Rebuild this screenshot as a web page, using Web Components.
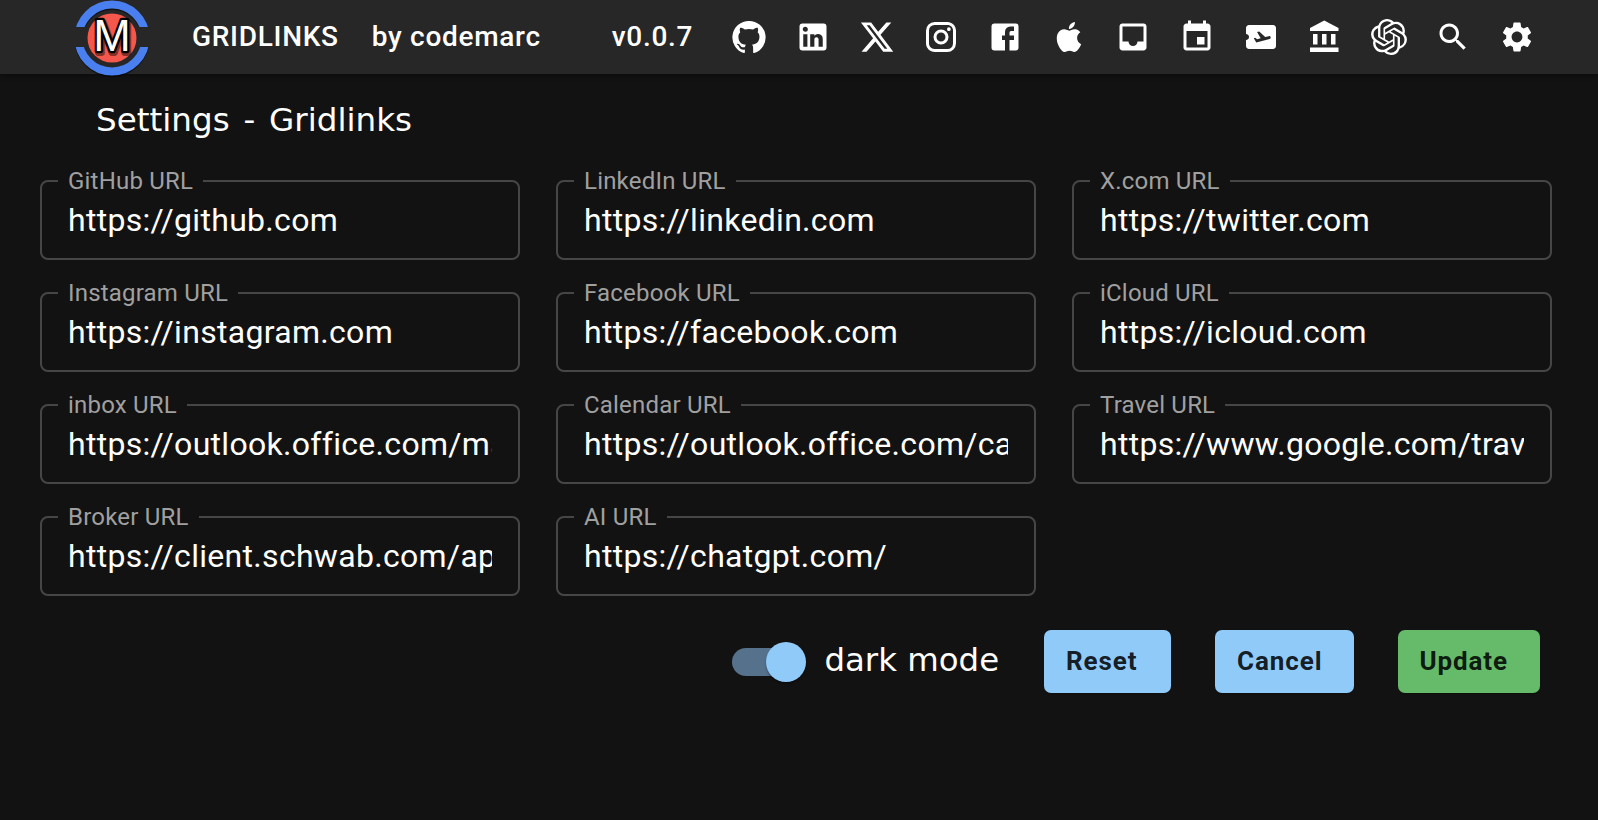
<!DOCTYPE html>
<html>
<head>
<meta charset="utf-8">
<title>Gridlinks</title>
<style>
  html, body { margin: 0; height: 100%; background: #121212; overflow: hidden; }
  body { font-family: Roboto, "Liberation Sans", sans-serif; color: #fff; }
  app-header { position: relative; z-index: 1; }
</style>
</head>
<body>
<app-header></app-header>
<settings-page></settings-page>

<script>
const ICONS = {
  github: "M12 1.27a11 11 0 00-3.48 21.46c.55.09.73-.28.73-.55v-1.84c-3.03.64-3.67-1.46-3.67-1.46-.55-1.29-1.28-1.65-1.28-1.65-.92-.65.1-.65.1-.65 1.1 0 1.73 1.1 1.73 1.1.92 1.65 2.57 1.2 3.21.92a2 2 0 01.64-1.47c-2.47-.27-5.04-1.19-5.04-5.5 0-1.1.46-2.1 1.2-2.84a3.76 3.76 0 010-2.93s.91-.28 3.11 1.1c1.8-.49 3.7-.49 5.5 0 2.1-1.38 3.02-1.1 3.02-1.1a3.76 3.76 0 010 2.93c.83.74 1.2 1.74 1.2 2.94 0 4.21-2.57 5.13-5.04 5.4.45.37.82.92.82 2.02v3.03c0 .27.1.64.73.55A11 11 0 0012 1.27",
  linkedin: "M19 3a2 2 0 0 1 2 2v14a2 2 0 0 1-2 2H5a2 2 0 0 1-2-2V5a2 2 0 0 1 2-2h14m-.5 15.5v-5.3a3.26 3.26 0 0 0-3.26-3.26c-.85 0-1.84.52-2.32 1.3v-1.11h-2.79v8.37h2.79v-4.93c0-.77.62-1.4 1.39-1.4a1.4 1.4 0 0 1 1.4 1.4v4.93h2.79M6.88 8.56a1.68 1.68 0 0 0 1.68-1.68c0-.93-.75-1.69-1.68-1.69a1.69 1.69 0 0 0-1.69 1.69c0 .93.76 1.68 1.69 1.68m1.39 9.94v-8.37H5.5v8.37h2.77z",
  x: "M18.244 2.25h3.308l-7.227 8.26 8.502 11.24H16.17l-5.214-6.817L4.99 21.75H1.68l7.73-8.835L1.254 2.25H8.08l4.713 6.231zm-1.161 17.52h1.833L7.084 4.126H5.117z",
  instagram: "M7.8 2h8.4C19.4 2 22 4.6 22 7.8v8.4a5.8 5.8 0 0 1-5.8 5.8H7.8C4.6 22 2 19.4 2 16.2V7.8A5.8 5.8 0 0 1 7.8 2m-.2 2A3.6 3.6 0 0 0 4 7.6v8.8C4 18.39 5.61 20 7.6 20h8.8a3.6 3.6 0 0 0 3.6-3.6V7.6C20 5.61 18.39 4 16.4 4H7.6m9.65 1.5a1.25 1.25 0 0 1 1.25 1.25A1.25 1.25 0 0 1 17.25 8 1.25 1.25 0 0 1 16 6.75a1.25 1.25 0 0 1 1.25-1.25M12 7a5 5 0 0 1 5 5 5 5 0 0 1-5 5 5 5 0 0 1-5-5 5 5 0 0 1 5-5m0 2a3 3 0 0 0-3 3 3 3 0 0 0 3 3 3 3 0 0 0 3-3 3 3 0 0 0-3-3z",
  facebook: "M5 3h14a2 2 0 0 1 2 2v14a2 2 0 0 1-2 2H5a2 2 0 0 1-2-2V5a2 2 0 0 1 2-2m13 2h-2.5A3.5 3.5 0 0 0 12 8.5V11h-2v3h2v7h3v-7h3v-3h-3V9a1 1 0 0 1 1-1h2V5z",
  apple: "M18.71 19.5c-.83 1.24-1.71 2.45-3.05 2.47-1.34.03-1.77-.79-3.29-.79-1.53 0-2 .77-3.27.82-1.31.05-2.3-1.32-3.14-2.53C4.25 17 2.94 12.45 4.7 9.39c.87-1.52 2.43-2.48 4.12-2.51 1.28-.02 2.5.87 3.29.87.78 0 2.26-1.07 3.81-.91.65.03 2.47.26 3.64 1.98-.09.06-2.17 1.28-2.15 3.81.03 3.02 2.65 4.03 2.68 4.04-.03.07-.42 1.44-1.38 2.83M13 3.5c.73-.83 1.94-1.46 2.94-1.5.13 1.17-.34 2.35-1.04 3.19-.69.85-1.83 1.51-2.95 1.42-.15-1.15.41-2.35 1.05-3.11z",
  inbox: "M19 3H4.99c-1.11 0-1.98.89-1.98 2L3 19c0 1.1.88 2 1.99 2H19c1.1 0 2-.9 2-2V5c0-1.11-.9-2-2-2zm0 12h-4c0 1.66-1.35 3-3 3s-3-1.34-3-3H4.99V5H19v10z",
  event: "M17 12h-5v5h5v-5zM16 1v2H8V1H6v2H5c-1.11 0-1.99.9-1.99 2L3 19c0 1.1.89 2 2 2h14c1.1 0 2-.9 2-2V5c0-1.1-.9-2-2-2h-1V1h-2zm3 18H5V8h14v11z",
  ticket: "M20.19 4H4c-1.1 0-1.99.9-1.99 2v4c1.1 0 2 .9 2 2s-.89 2-2 2v4c0 1.1.9 2 2 2H20c1.1 0 2-.9 2-2V6c0-1.1-.9-2-1.81-2zm-2.46 9.3-8.86 2.36-1.66-2.88.93-.25 1.26.99 2.39-.64-2.4-4.16 1.4-.38 4.01 3.74 2.44-.65c.51-.14 1.04.17 1.18.68.13.51-.17 1.04-.69 1.19z",
  bank: "M4 10v7h3v-7H4zm6 0v7h3v-7h-3zM2 22h19v-3H2v3zm14-12v7h3v-7h-3zm-4.5-9L2 6v2h19V6l-9.5-5z",
  openai: "M22.2819 9.8211a5.9847 5.9847 0 0 0-.5157-4.9108 6.0462 6.0462 0 0 0-6.5098-2.9A6.0651 6.0651 0 0 0 4.9807 4.1818a5.9847 5.9847 0 0 0-3.9977 2.9 6.0462 6.0462 0 0 0 .7427 7.0966 5.98 5.98 0 0 0 .511 4.9107 6.051 6.051 0 0 0 6.5146 2.9001A5.9847 5.9847 0 0 0 13.2599 24a6.0557 6.0557 0 0 0 5.7718-4.2058 5.9894 5.9894 0 0 0 3.9977-2.9001 6.0557 6.0557 0 0 0-.7475-7.0729zm-9.022 12.6081a4.4755 4.4755 0 0 1-2.8764-1.0408l.1419-.0804 4.7783-2.7582a.7948.7948 0 0 0 .3927-.6813v-6.7369l2.02 1.1686a.071.071 0 0 1 .038.052v5.5826a4.504 4.504 0 0 1-4.4945 4.4944zm-9.6607-4.1254a4.4708 4.4708 0 0 1-.5346-3.0137l.142.0852 4.783 2.7582a.7712.7712 0 0 0 .7806 0l5.8428-3.3685v2.3324a.0804.0804 0 0 1-.0332.0615L9.74 19.9502a4.4992 4.4992 0 0 1-6.1408-1.6464zM2.3408 7.8956a4.485 4.485 0 0 1 2.3655-1.9728V11.6a.7664.7664 0 0 0 .3879.6765l5.8144 3.3543-2.0201 1.1685a.0757.0757 0 0 1-.071 0l-4.8303-2.7865A4.504 4.504 0 0 1 2.3408 7.872zm16.5963 3.8558L13.1038 8.364 15.1192 7.2a.0757.0757 0 0 1 .071 0l4.8303 2.7913a4.4944 4.4944 0 0 1-.6765 8.1042v-5.6772a.79.79 0 0 0-.407-.667zm2.0107-3.0231l-.142-.0852-4.7735-2.7818a.7759.7759 0 0 0-.7854 0L9.409 9.2297V6.8974a.0662.0662 0 0 1 .0284-.0615l4.8303-2.7866a4.4992 4.4992 0 0 1 6.6802 4.66zM8.3065 12.863l-2.02-1.1638a.0804.0804 0 0 1-.038-.0567V6.0742a4.4992 4.4992 0 0 1 7.3757-3.4537l-.142.0805L8.704 5.459a.7948.7948 0 0 0-.3927.6813zm1.0976-2.3654l2.602-1.4998 2.6069 1.4998v2.9994l-2.5974 1.4997-2.6067-1.4997Z",
  search: "M15.5 14h-.79l-.28-.27C15.41 12.59 16 11.11 16 9.5 16 5.91 13.09 3 9.5 3S3 5.91 3 9.5 5.91 16 9.5 16c1.61 0 3.09-.59 4.23-1.57l.27.28v.79l5 4.99L20.49 19l-4.99-5zm-6 0C7.01 14 5 11.99 5 9.5S7.01 5 9.5 5 14 7.01 14 9.5 11.99 14 9.5 14z",
  settings: "M19.14 12.94c.04-.3.06-.61.06-.94 0-.32-.02-.64-.07-.94l2.03-1.58c.18-.14.23-.41.12-.61l-1.92-3.32c-.12-.22-.37-.29-.59-.22l-2.39.96c-.5-.38-1.03-.7-1.62-.94l-.36-2.54c-.04-.24-.24-.41-.48-.41h-3.84c-.24 0-.43.17-.47.41l-.36 2.54c-.59.24-1.13.57-1.62.94l-2.39-.96c-.22-.08-.47 0-.59.22L2.74 8.87c-.12.21-.08.47.12.61l2.03 1.58c-.05.3-.09.63-.09.94s.02.64.07.94l-2.03 1.58c-.18.14-.23.41-.12.61l1.92 3.32c.12.22.37.29.59.22l2.39-.96c.5.38 1.03.7 1.62.94l.36 2.54c.05.24.24.41.48.41h3.84c.24 0 .44-.17.47-.41l.36-2.54c.59-.24 1.13-.56 1.62-.94l2.39.96c.22.08.47 0 .59-.22l1.92-3.32c.12-.22.07-.47-.12-.61l-2.01-1.58zM12 15.6c-1.98 0-3.6-1.62-3.6-3.6s1.62-3.6 3.6-3.6 3.6 1.62 3.6 3.6-1.62 3.6-3.6 3.6z"
};

class NavIcon extends HTMLElement {
  connectedCallback() {
    const name = this.getAttribute("name");
    this.attachShadow({ mode: "open" }).innerHTML = `
      <style>
        :host { display: flex; width: 64px; height: 64px; align-items: center; justify-content: center; }
        svg { width: 36px; height: 36px; fill: #fff; display: block; }
      </style>
      <svg viewBox="0 0 24 24"><path d="${ICONS[name]}"/></svg>`;
  }
}
customElements.define("nav-icon", NavIcon);

class BrandLogo extends HTMLElement {
  connectedCallback() {
    this.attachShadow({ mode: "open" }).innerHTML = `
      <style>
        :host { display: block; width: 76px; height: 74px; align-self: flex-start; }
        svg { display: block; overflow: visible; }
        text { font-family: "Liberation Sans", Arial, sans-serif; font-weight: 400; }
      </style>
      <svg width="76" height="74" viewBox="0 0 76 74">
        <defs>
          <clipPath id="gap"><rect x="-4" y="-4" width="84" height="31"/><rect x="-4" y="47" width="84" height="36"/></clipPath>
        </defs>
        <g clip-path="url(#gap)">
          <circle cx="38" cy="39.5" r="33.5" fill="none" stroke="#000" stroke-opacity=".5" stroke-width="8"/>
          <circle cx="38" cy="38" r="33.5" fill="none" stroke="#4a7ff0" stroke-width="8"/>
        </g>
        <circle cx="38" cy="38" r="24.5" fill="#f4574b"/>
        <text x="39" y="52.5" text-anchor="middle" font-size="45" fill="#000" stroke="#000" stroke-width="6" stroke-linejoin="round" opacity=".45">M</text>
        <text x="38" y="50.5" text-anchor="middle" font-size="45" fill="#fff" stroke="#000" stroke-width="4.5" paint-order="stroke" stroke-linejoin="round">M</text>
      </svg>`;
  }
}
customElements.define("brand-logo", BrandLogo);

class AppHeader extends HTMLElement {
  connectedCallback() {
    const names = ["github", "linkedin", "x", "instagram", "facebook", "apple", "inbox", "event", "ticket", "bank", "openai", "search", "settings"];
    this.attachShadow({ mode: "open" }).innerHTML = `
      <style>
        :host { display: flex; align-items: center; height: 74px; background: #272727; padding-left: 74px; box-sizing: border-box; box-shadow: 0 2px 4px rgba(0,0,0,.3); }
        .t { font-size: 28px; font-weight: 500; letter-spacing: .7px; white-space: nowrap; line-height: 74px; }
        .brand { margin-left: 42px; }
        .by { margin-left: 33px; }
        .ver { margin-left: 71px; }
        .icons { display: flex; margin-left: 24px; }
      </style>
      <brand-logo></brand-logo>
      <span class="t brand">GRIDLINKS</span>
      <span class="t by">by codemarc</span>
      <span class="t ver">v0.0.7</span>
      <div class="icons">${names.map(n => `<nav-icon name="${n}"></nav-icon>`).join("")}</div>`;
  }
}
customElements.define("app-header", AppHeader);

class UrlField extends HTMLElement {
  connectedCallback() {
    this.attachShadow({ mode: "open" }).innerHTML = `
      <style>
        :host { display: block; }
        fieldset { margin: 0; padding: 0 26px; height: 91px; box-sizing: border-box; border: 2px solid #464646; border-radius: 8px; min-width: 0; }
        legend { padding: 0 10px; margin-left: -10px; font-size: 24px; line-height: 24px; color: #a0a0a0; letter-spacing: .2px; white-space: nowrap; }
        .value { font-size: 32px; line-height: 54px; letter-spacing: .3px; color: #fff; white-space: nowrap; overflow: hidden; }
      </style>
      <fieldset>
        <legend>${this.getAttribute("label")}</legend>
        <div class="value"><slot></slot></div>
      </fieldset>`;
  }
}
customElements.define("url-field", UrlField);

class ModeSwitch extends HTMLElement {
  connectedCallback() {
    this.attachShadow({ mode: "open" }).innerHTML = `
      <style>
        :host { display: flex; align-items: center; gap: 18px; }
        .sw { position: relative; width: 74px; height: 40px; }
        .track { position: absolute; left: 0; top: 6px; width: 70px; height: 28px; border-radius: 14px; background: #55718c; }
        .thumb { position: absolute; right: 0; top: 0; width: 40px; height: 40px; border-radius: 50%; background: #90caf9; box-shadow: 0 2px 2px rgba(0,0,0,.3); }
        .txt { font-family: "DejaVu Sans", sans-serif; font-size: 32.4px; color: #fff; line-height: 40px; white-space: nowrap; position: relative; top: -2px; }
      </style>
      <div class="sw"><div class="track"></div><div class="thumb"></div></div>
      <span class="txt"><slot></slot></span>`;
  }
}
customElements.define("mode-switch", ModeSwitch);

class ActionButton extends HTMLElement {
  connectedCallback() {
    const bg = this.getAttribute("color") || "#90caf9";
    this.attachShadow({ mode: "open" }).innerHTML = `
      <style>
        :host { display: inline-flex; align-items: center; height: 63px; padding: 0 32px 2px 21px; box-sizing: border-box; border-radius: 7px; background: ${bg}; color: rgba(0,0,0,.87); font-size: 26px; font-weight: 700; letter-spacing: .9px; box-shadow: 0 3px 2px -2px rgba(0,0,0,.2); white-space: nowrap; }
      </style>
      <slot></slot>`;
  }
}
customElements.define("action-button", ActionButton);

class SettingsPage extends HTMLElement {
  connectedCallback() {
    const fields = [
      ["GitHub URL", "https://github.com"],
      ["LinkedIn URL", "https://linkedin.com"],
      ["X.com URL", "https://twitter.com"],
      ["Instagram URL", "https://instagram.com"],
      ["Facebook URL", "https://facebook.com"],
      ["iCloud URL", "https://icloud.com"],
      ["inbox URL", "https://outlook.office.com/mail"],
      ["Calendar URL", "https://outlook.office.com/calendar"],
      ["Travel URL", "https://www.google.com/travel"],
      ["Broker URL", "https://client.schwab.com/app"],
      ["AI URL", "https://chatgpt.com/"]
    ];
    this.attachShadow({ mode: "open" }).innerHTML = `
      <style>
        :host { display: block; padding: 0 46px 0 40px; }
        h1 { margin: 0; padding: 26px 0 0 56px; font-family: "DejaVu Sans", sans-serif; font-size: 32.6px; word-spacing: 3.5px; font-weight: 400; line-height: 40px; height: 72px; box-sizing: border-box; }
        .grid { display: grid; grid-template-columns: repeat(3, 480px); column-gap: 36px; row-gap: 21px; margin-top: 23px; }
        .actions { display: flex; align-items: center; justify-content: flex-end; margin: 34px 12px 0 0; }
        mode-switch { margin-right: 45px; }
        .reset { min-width: 127px; padding-left: 22px; }
        .cancel { margin-left: 44px; padding-left: 22px; }
        .update { margin-left: 44px; }
      </style>
      <h1>Settings - Gridlinks</h1>
      <div class="grid">
        ${fields.map(([l, v]) => `<url-field label="${l}">${v}</url-field>`).join("")}
      </div>
      <div class="actions">
        <mode-switch>dark mode</mode-switch>
        <action-button class="reset">Reset</action-button>
        <action-button class="cancel">Cancel</action-button>
        <action-button class="update" color="#66bb6a">Update</action-button>
      </div>`;
  }
}
customElements.define("settings-page", SettingsPage);
</script>
</body>
</html>
